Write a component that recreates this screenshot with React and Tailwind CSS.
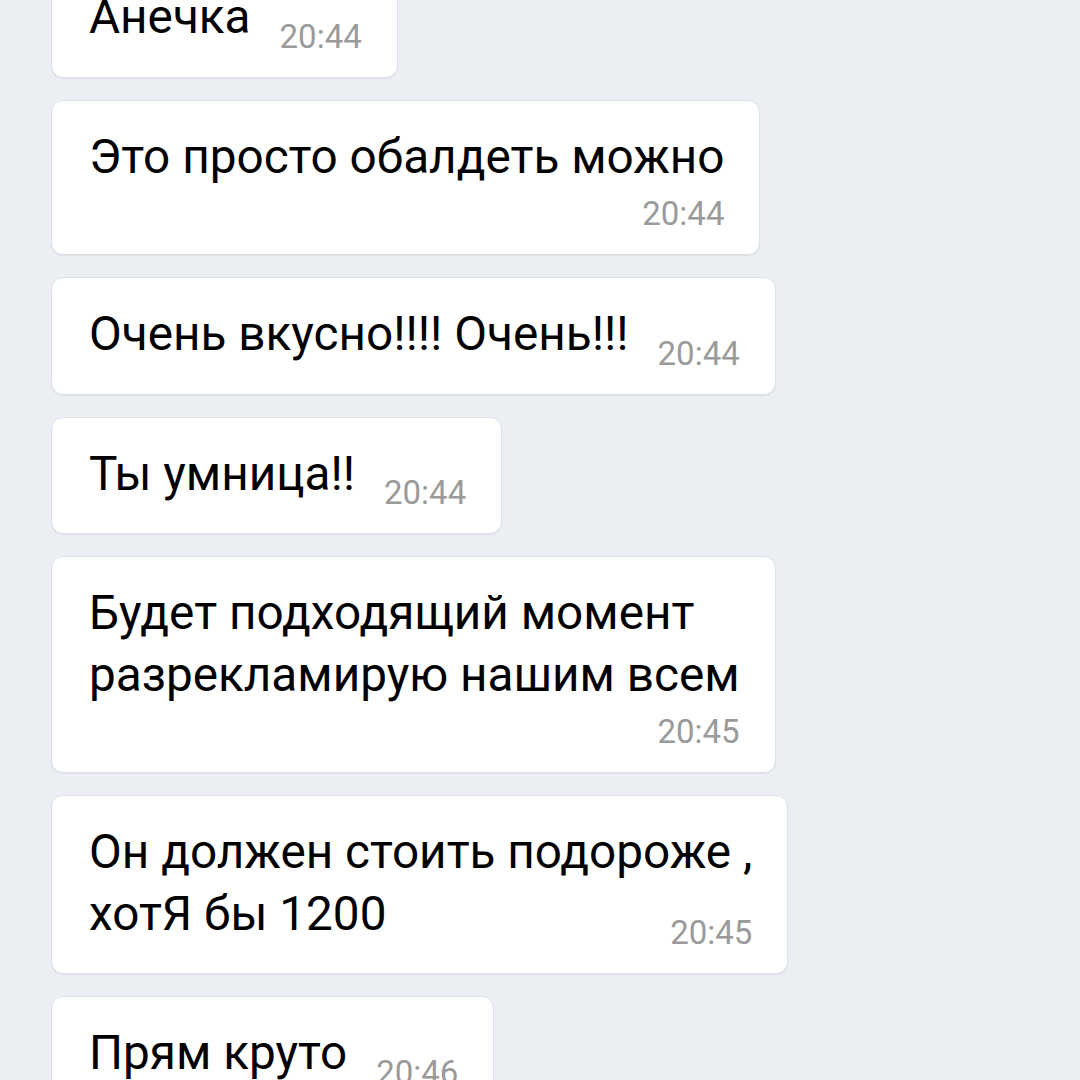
const font = { fontFamily: "Roboto, 'Noto Sans', sans-serif" };

function Time({ children }) {
    return <span className="text-[33px] leading-[54px] text-[#9a9a9a] whitespace-nowrap">{children}</span>;
}

function Bubble({ children, pb }) {
    return (
        <div className={"w-fit bg-white rounded-[12px] border border-[#dde0e6] shadow-[0_1px_1px_rgba(0,0,0,0.06)] pl-[37px] pr-[35px] pt-[26px] text-[47.7px] leading-[61.5px] text-black " + pb}>
            {children}
        </div>
    );
}

// text and time share the last line
function InlineBubble({ lines, time }) {
    const head = lines.slice(0, -1);
    const last = lines[lines.length - 1];
    return (
        <Bubble pb="pb-[13px]">
            {head.map((l, i) => (
                <div key={i} className="whitespace-nowrap">{l}</div>
            ))}
            <div className="flex flex-row items-end justify-between gap-[29px]">
                <div className="whitespace-nowrap pb-[15px]">{last}</div>
                <Time>{time}</Time>
            </div>
        </Bubble>
    );
}

// time gets its own row below the text
function BlockBubble({ lines, time }) {
    return (
        <Bubble pb="pb-[13px]">
            {lines.map((l, i) => (
                <div key={i} className="whitespace-nowrap">{l}</div>
            ))}
            <div className="flex justify-end -mt-[1px]">
                <Time>{time}</Time>
            </div>
        </Bubble>
    );
}

export default function App() {
    return (
        <div className="w-[1080px] h-[1080px] overflow-hidden bg-[#ebeef3]" style={font}>
            <div className="flex flex-col gap-[22px] pl-[51px] -mt-[40px]">
                <InlineBubble lines={["Анечка"]} time="20:44" />
                <BlockBubble lines={["Это просто обалдеть можно"]} time="20:44" />
                <InlineBubble lines={["Очень вкусно!!!! Очень!!!"]} time="20:44" />
                <InlineBubble lines={["Ты умница!!"]} time="20:44" />
                <BlockBubble lines={["Будет подходящий момент", "разрекламирую нашим всем"]} time="20:45" />
                <InlineBubble lines={["Он должен стоить подороже ,", "хотЯ бы 1200"]} time="20:45" />
                <InlineBubble lines={["Прям круто"]} time="20:46" />
            </div>
        </div>
    );
}
